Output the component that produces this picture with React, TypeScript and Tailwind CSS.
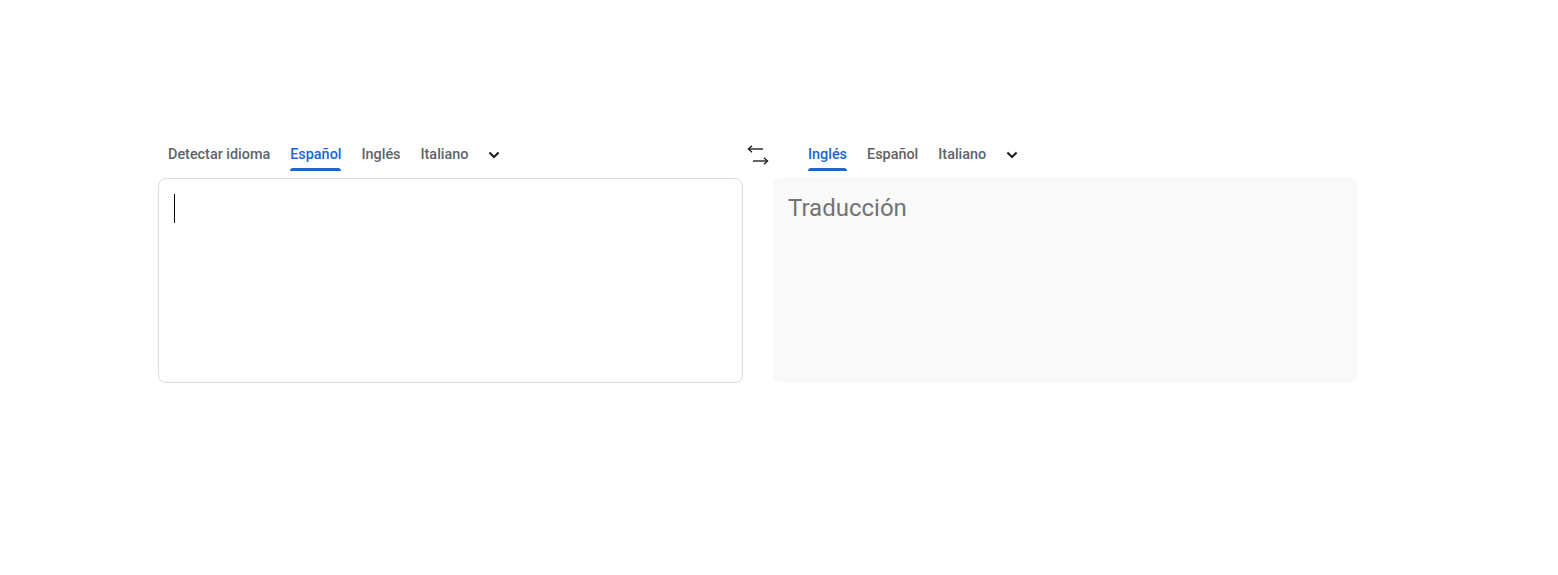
import React, { useState } from 'react'

const SwapIcon = () => (
  <svg width="22" height="20" viewBox="0 0 22 20" fill="none" stroke="#202124" strokeWidth="1.4">
    <path d="M1.5 4 H16" />
    <path d="M5 0.8 L1.5 4 L5 7.2" />
    <path d="M6 16 H20.5" />
    <path d="M17 12.8 L20.5 16 L17 19.2" />
  </svg>
)

const Chevron = () => (
  <svg width="20" height="20" viewBox="0 0 24 24" fill="#202124">
    <path d="M16.59 8.09 12 12.67 7.41 8.09 5.6 9.9l6.4 6.4 6.4-6.4z" />
  </svg>
)

const Tabs = ({ items, active, onPick }: { items: string[]; active: number; onPick: (i: number) => void }) => (
  <div className="flex items-stretch h-[44px]">
    {items.map((t, i) => (
      <button
        key={t}
        onClick={() => onPick(i)}
        className={`relative px-[10px] pt-[11px] text-[14.4px] font-medium ${i === active ? 'text-[#1967d2]' : 'text-[#5f6368]'}`}
      >
        <span className="block pb-[9px]">{t}</span>
        {i === active && (
          <span className="absolute left-[10px] right-[10px] bottom-[5px] h-[3px] bg-[#1967d2] rounded-t" />
        )}
      </button>
    ))}
    <button className="pl-[6px] pr-[9px] pt-[1px] flex items-center">
      <Chevron />
    </button>
  </div>
)

export default function App() {
  const [src, setSrc] = useState(1)
  const [dst, setDst] = useState(0)
  const [text, setText] = useState('')

  return (
    <div className="w-[1558px] h-[575px] bg-white font-['Roboto',sans-serif]">
      <div className="pt-[132px] pl-[158px]">
        <div className="flex">
          <div className="w-[585px]">
            <Tabs items={['Detectar idioma', 'Español', 'Inglés', 'Italiano']} active={src} onPick={setSrc} />
          </div>
          <div className="w-[30px] flex justify-center pt-[13px]">
            <SwapIcon />
          </div>
          <div className="w-[585px] pl-[25px]">
            <Tabs items={['Inglés', 'Español', 'Italiano']} active={dst} onPick={setDst} />
          </div>
        </div>
        <div className="flex gap-[30px] mt-[2px]">
          <div className="w-[585px] h-[205px] border border-[#dadce0] rounded-[8px] px-[15px] pt-[15px]">
            <div className="flex">
              <span className="w-px h-[29px] bg-black" />
              <input
                value={text}
                onChange={(e) => setText(e.target.value)}
                className="flex-1 outline-none text-[24px] text-[#202124]"
              />
            </div>
          </div>
          <div className="w-[585px] h-[204px] bg-[#f9f9f9] rounded-[8px] px-[15px] pt-[14px]">
            <div className="text-[24px] leading-[32px] text-[#737373]">Traducción</div>
          </div>
        </div>
      </div>
    </div>
  )
}
